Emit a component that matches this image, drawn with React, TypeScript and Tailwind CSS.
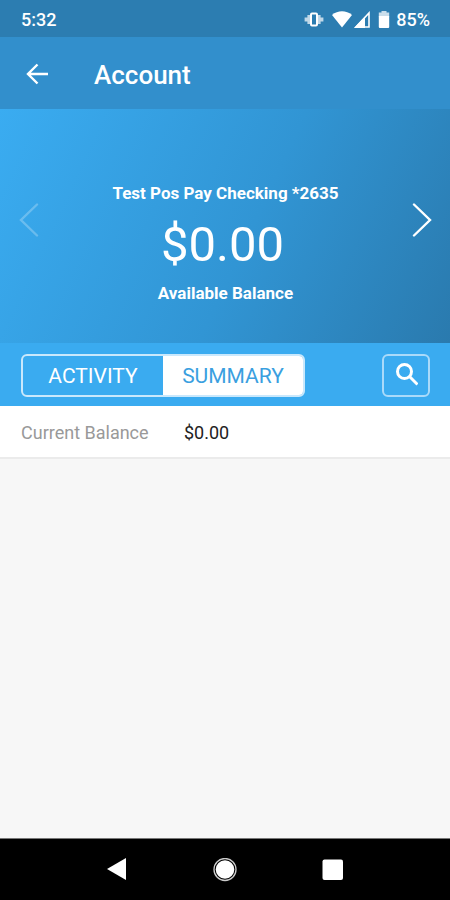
import React, { useState } from "react";

function StatusBar() {
  return (
    <div className="flex h-[37px] items-center justify-between bg-[#2c7db1] pr-5 pl-[21px] pt-[2px] text-lg font-medium">
      <span>5:32</span>
      <div className="flex items-center">
        <svg className="mr-2 h-4 w-5" viewBox="0 0 20 16" fill="none" aria-hidden="true">
          <path d="M4.800 3v9M2 5.500v4M15.200 3v9M18 5.500v4" stroke="#fff" strokeOpacity="0.7" strokeWidth="2.800" />
          <rect x="7" y="1.500" width="6" height="12" rx="1" stroke="#fff" strokeWidth="2" />
        </svg>
        <svg className="h-[18px] w-5" viewBox="0 0 20 18" fill="#fff" aria-hidden="true">
          <path d="M0 4C5.800-.9 14.200-.9 20 4L10 16.500z" />
        </svg>
        <svg className="ml-[2px] h-[18px] w-4" viewBox="0 0 16 18" aria-hidden="true">
          <path d="M15 2v14H2z" fill="none" stroke="#fff" strokeWidth="1.600" />
          <path d="M0 17L11 5.500V17z" fill="#fff" />
        </svg>
        <svg className="ml-2 h-[18px] w-3" viewBox="0 0 12 18" fill="#fff" aria-hidden="true">
          <path d="M3.500 0h5v1.500h2.700v4H.8v-4h2.700z" fillOpacity="0.75" />
          <path d="M.8 5h10.400v11a1 1 0 0 1-1 1H1.800a1 1 0 0 1-1-1z" />
        </svg>
        <span className="ml-[6px]">85%</span>
      </div>
    </div>
  );
}

function Header() {
  return (
    <header className="flex h-[72px] items-center bg-[#328fcc] pl-[25px]">
      <button type="button" aria-label="Back" className="h-6 w-6">
        <svg className="h-6 w-6" viewBox="0 0 24 24" fill="none" stroke="#fff" strokeWidth="2.400" aria-hidden="true">
          <path d="M23 13H3M12.500 3.500L3 13l9.500 9.500" />
        </svg>
      </button>
      <h1 className="ml-[45px] pt-1 text-[26px] leading-8 font-medium">Account</h1>
    </header>
  );
}

function Chevron({ label, path, disabled }: { label: string; path: string; disabled?: boolean }) {
  return (
    <button type="button" aria-label={label} disabled={disabled} className="mt-[94px] h-[34px] w-5 disabled:opacity-25">
      <svg className="h-[34px] w-5" viewBox="0 0 20 34" fill="none" stroke="#fff" strokeWidth="2.400" strokeLinecap="round" aria-hidden="true">
        <path d={path} />
      </svg>
    </button>
  );
}

function Balance() {
  return (
    <section className="flex h-[234px] items-start justify-between bg-linear-[115deg] from-[#3aacf1] via-[#3195d4] via-55% to-[#2a7aae] pr-[18px] pl-[19px]">
      <Chevron label="Previous account" path="M18 1.500L2 17l16 15.500" disabled />
      <div className="mt-[72px] text-center">
        <h2 className="text-[17px] leading-6 font-bold">Test Pos Pay Checking *2635</h2>
        <p className="mt-[10px] mb-[6px] pr-[6px] text-[49px] leading-[60px]">$0.00</p>
        <p className="text-[17px] leading-6 font-bold">Available Balance</p>
      </div>
      <Chevron label="Next account" path="M2 1.500L18 17 2 32.500" />
    </section>
  );
}

const tabs = ["ACTIVITY", "SUMMARY"];

function Toolbar() {
  const [active, setActive] = useState("SUMMARY");
  return (
    <div className="flex h-[63px] items-center justify-between bg-[#3aabf0] pt-px pr-5 pl-[21px]">
      <div role="tablist" className="flex h-[43px] w-[284px] overflow-hidden rounded-md border-2 border-[#c9e8fc]">
        {tabs.map((tab) => (
          <button
            key={tab}
            type="button"
            role="tab"
            aria-selected={active === tab}
            onClick={() => setActive(tab)}
            className="flex-1 pt-[2px] text-[21px] leading-8 text-white aria-selected:bg-white aria-selected:text-[#3a9fe0]"
          >
            {tab}
          </button>
        ))}
      </div>
      <button type="button" aria-label="Search" className="flex h-[43px] w-12 items-center justify-center rounded-md border-2 border-[#a9dafa]">
        <svg className="h-6 w-6" viewBox="0 0 24 24" fill="none" stroke="#fff" strokeWidth="3" aria-hidden="true">
          <circle cx="10.500" cy="8.500" r="7" />
          <path d="M15.500 13.500l8 8" />
        </svg>
      </button>
    </div>
  );
}

function NavBar() {
  return (
    <nav className="flex h-[62px] items-center justify-around border-t border-[#777] bg-black px-[63px]">
      <button type="button" aria-label="Back" className="h-6 w-6">
        <svg className="h-6 w-6" viewBox="0 0 24 24" fill="#fff" aria-hidden="true">
          <path d="M2 11L21 0v22z" />
        </svg>
      </button>
      <button type="button" aria-label="Home" className="h-6 w-6">
        <svg className="h-6 w-6" viewBox="0 0 24 24" aria-hidden="true">
          <circle cx="12" cy="11.500" r="11" fill="none" stroke="#fff" strokeOpacity="0.8" strokeWidth="1.300" />
          <circle cx="12" cy="11.500" r="9.300" fill="#fff" />
        </svg>
      </button>
      <button type="button" aria-label="Recent apps" className="h-6 w-6">
        <svg className="h-6 w-6" viewBox="0 0 24 24" fill="#fff" aria-hidden="true">
          <rect x="1.500" y="1.500" width="20.500" height="20.500" rx="2" />
        </svg>
      </button>
    </nav>
  );
}

export default function App() {
  return (
    <div className="flex min-h-screen flex-col bg-[#f7f7f7] font-[Roboto,sans-serif] text-white">
      <StatusBar />
      <Header />
      <main className="flex-1">
        <Balance />
        <Toolbar />
        <dl className="flex h-[53px] items-center border-b-2 border-[#ebebeb] bg-white px-[21px] pt-[2px] text-lg">
          <dt className="w-[163px] text-[#999]">Current Balance</dt>
          <dd className="text-[#222]">$0.00</dd>
        </dl>
      </main>
      <NavBar />
    </div>
  );
}
